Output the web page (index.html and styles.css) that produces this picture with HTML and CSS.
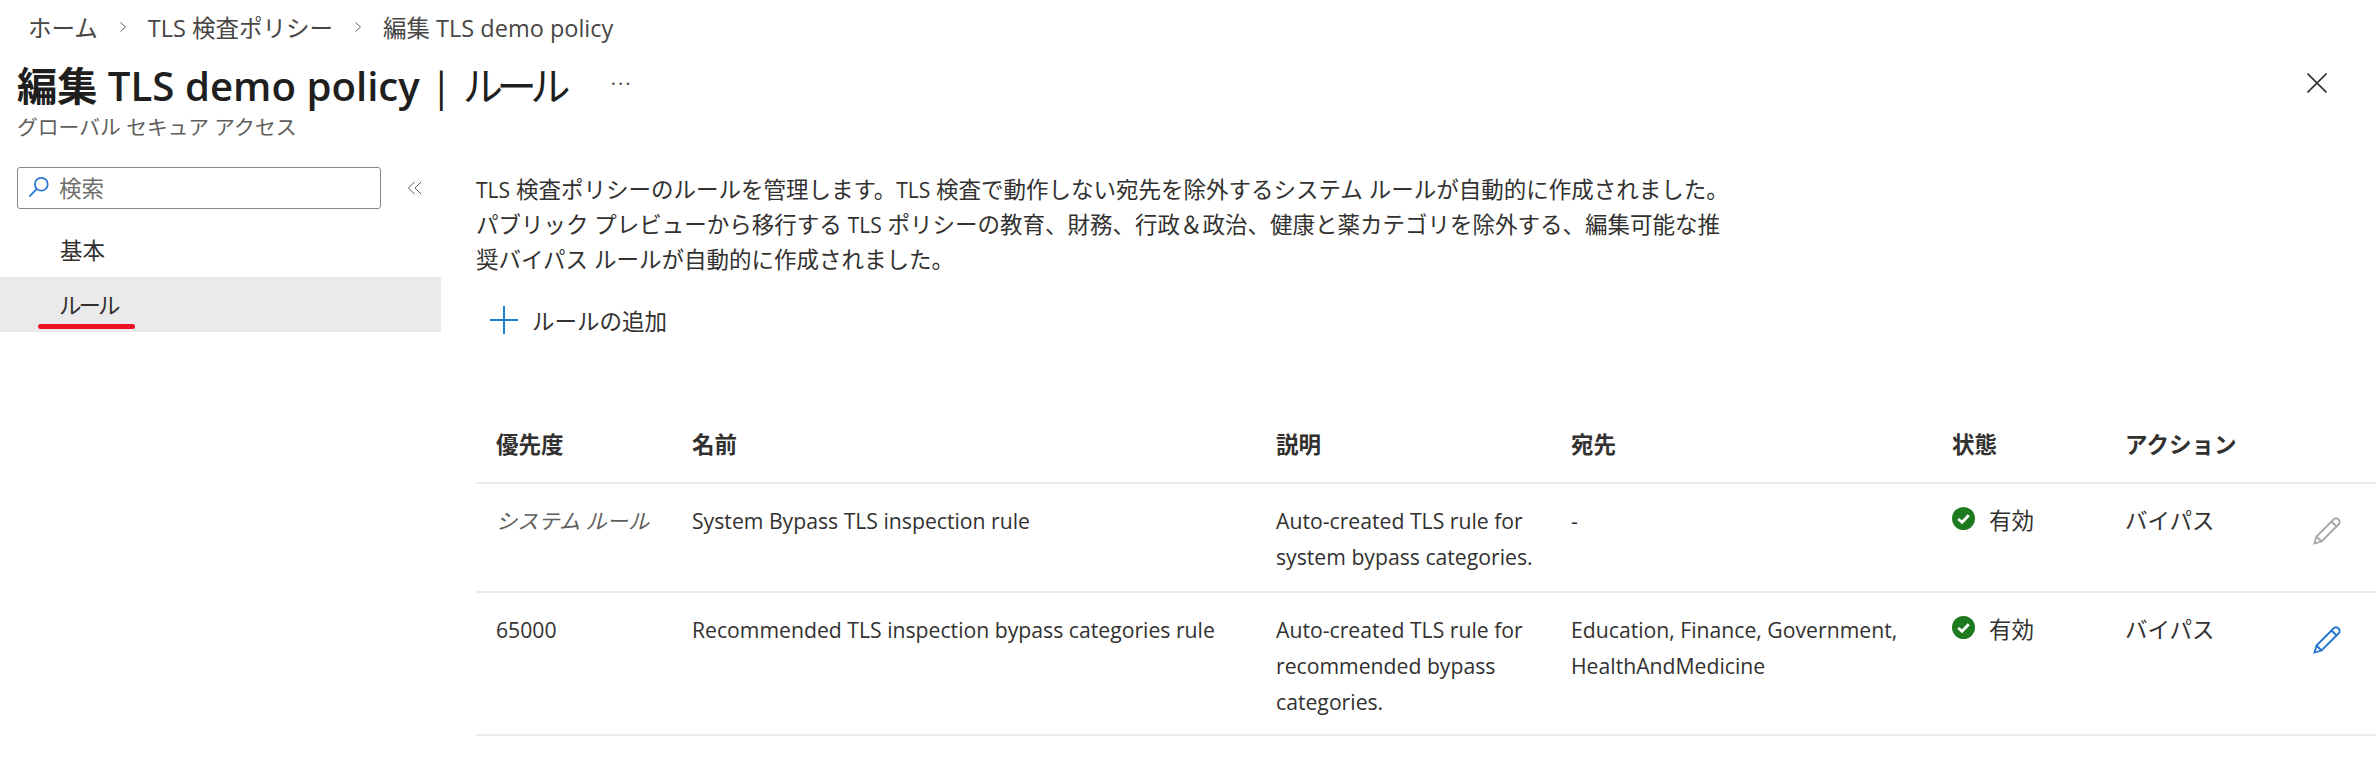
FILE: index.html
```html
<!DOCTYPE html>
<html lang="ja">
<head>
  <meta charset="UTF-8">
  <title>編集 TLS demo policy | ルール</title>
  <link rel="stylesheet" href="styles.css">
</head>
<body>

<nav class="crumbs">
  <a>ホーム</a>
  <svg class="crumb-sep" viewBox="0 0 10 14"><path d="M2.500 2.500 7.500 7 2.500 11.500"/></svg>
  <a>TLS 検査ポリシー</a>
  <svg class="crumb-sep" viewBox="0 0 10 14"><path d="M2.500 2.500 7.500 7 2.500 11.500"/></svg>
  <a>編集 TLS demo policy</a>
</nav>

<header class="blade-head">
  <div class="title-row">
    <h1>編集 TLS demo policy <span class="h-light">| <span class="h-kana">ルール</span></span></h1>
    <span class="more">...</span>
    <svg class="close" viewBox="0 0 20 20"><path d="M0.500 0.500 19.500 19.500M19.500 0.500 0.500 19.500"/></svg>
  </div>
  <div class="subtitle">グローバル セキュア アクセス</div>
</header>

<div class="blade-body">
  <aside class="side">
    <div class="search-row">
      <div class="search">
        <svg viewBox="0 0 24 24"><circle cx="14.500" cy="9" r="7"/><path d="M9.500 14 1.500 22.500"/></svg>
        <span>検索</span>
      </div>
      <svg class="collapse" viewBox="0 0 16 16"><path d="M7.500 1 0.500 8 7.500 15M15 1 8 8 15 15"/></svg>
    </div>
    <a class="nav-item">基本</a>
    <a class="nav-item active"><span class="kana-tight">ルール</span><i class="red-mark"></i></a>
  </aside>

  <main class="content">
    <p class="intro"><span class="lat">TLS</span> 検査ポリシーのルールを管理します。<span class="lat">TLS</span> 検査で動作しない宛先を除外するシステム ルールが自動的に作成されました。<br>パブリック プレビューから移行する <span class="lat">TLS</span> ポリシーの教育、財務、行政＆政治、健康と薬カテゴリを除外する、編集可能な推<br>奨バイパス ルールが自動的に作成されました。</p>

    <div class="toolbar">
      <svg class="plus" viewBox="0 0 28 28"><path d="M0 14H28M14 0V28"/></svg>
      <span>ルールの追加</span>
    </div>

    <table>
      <colgroup>
        <col class="c-pri"><col class="c-name"><col class="c-desc"><col class="c-dest"><col class="c-state"><col class="c-act"><col>
      </colgroup>
      <thead>
        <tr>
          <th>優先度</th>
          <th>名前</th>
          <th>説明</th>
          <th>宛先</th>
          <th>状態</th>
          <th>アクション</th>
          <th></th>
        </tr>
      </thead>
      <tbody>
        <tr class="row-a">
          <td class="sys">システム ルール</td>
          <td>System Bypass TLS inspection rule</td>
          <td>Auto-created TLS rule for system bypass categories.</td>
          <td>-</td>
          <td class="ja"><span class="state"><svg viewBox="0 0 24 24"><circle cx="12" cy="12" r="12"/><path d="M6.500 12.500 10.500 16 17.500 8.500"/></svg>有効</span></td>
          <td class="ja">バイパス</td>
          <td><svg class="pencil off" viewBox="0 0 28 28"><path d="M1.500 26.500 3.500 19.500 20.500 2.500C22 1 24 1 25.500 2.500 27 4 27 6 25.500 7.500L8.500 24.500ZM3.500 19.500 8.500 24.500M18.500 4.500 23.500 9.500"/></svg></td>
        </tr>
        <tr class="row-b">
          <td>65000</td>
          <td>Recommended TLS inspection bypass categories rule</td>
          <td>Auto-created TLS rule for recommended bypass categories.</td>
          <td>Education, Finance, Government, HealthAndMedicine</td>
          <td class="ja"><span class="state"><svg viewBox="0 0 24 24"><circle cx="12" cy="12" r="12"/><path d="M6.500 12.500 10.500 16 17.500 8.500"/></svg>有効</span></td>
          <td class="ja">バイパス</td>
          <td><svg class="pencil" viewBox="0 0 28 28"><path d="M1.500 26.500 3.500 19.500 20.500 2.500C22 1 24 1 25.500 2.500 27 4 27 6 25.500 7.500L8.500 24.500ZM3.500 19.500 8.500 24.500M18.500 4.500 23.500 9.500"/></svg></td>
        </tr>
      </tbody>
    </table>
  </main>
</div>

</body>
</html>
```

FILE: styles.css
```css
* {
  box-sizing: border-box;
}
body {
  margin: 0;
  background: #fff;
  color: #323130;
  font-family: "Open Sans", "Noto Sans CJK JP", sans-serif;
  font-size: 22.500px;
  overflow: hidden;
}
svg {
  display: block;
  flex: none;
  fill: none;
}
.lat {
  font-size: 21px;
  line-height: 1;
}

.crumbs {
  display: flex;
  align-items: center;
  height: 38px;
  margin-top: 8px;
  padding-left: 28px;
  font-size: 23.500px;
  color: #484644;
}
.crumb-sep {
  width: 10px;
  height: 14px;
  margin: 0 20px;
  stroke: #605e5c;
  stroke-width: 1;
}

.blade-head {
  padding: 0 0 0 17px;
}
.title-row {
  display: flex;
  align-items: center;
  height: 60px;
  margin-top: 7px;
}
h1 {
  margin: 0;
  font-size: 40.200px;
  font-weight: 600;
  color: #201f1e;
  white-space: pre;
}
.h-light {
  font-weight: 400;
}
.h-kana {
  letter-spacing: -6.500px;
}
.more {
  margin-left: 47px;
  font-size: 20px;
  letter-spacing: 2px;
  color: #484644;
  padding-bottom: 12px;
}
.close {
  width: 20px;
  height: 20px;
  margin-left: auto;
  margin-right: 49px;
  stroke: #323130;
  stroke-width: 1.600;
}
.subtitle {
  font-size: 20.800px;
  line-height: 28px;
  color: #605e5c;
}

.blade-body {
  display: flex;
  margin-top: 24px;
}
.side {
  flex: none;
  width: 441px;
  padding-top: 2px;
}
.search-row {
  display: flex;
  align-items: center;
  padding-left: 17px;
  margin-bottom: 13px;
}
.search {
  display: flex;
  align-items: center;
  width: 364px;
  height: 42px;
  padding-left: 10px;
  padding-bottom: 2px;
  border: 1.500px solid #8a8886;
  border-radius: 3px;
  color: #6e6d6b;
}
.search svg {
  width: 22px;
  height: 22px;
  margin-right: 9px;
  stroke: #2b7cd3;
  stroke-width: 2;
}
.collapse {
  width: 14px;
  height: 14px;
  margin-left: 27px;
  stroke: #484644;
  stroke-width: 1;
}
.nav-item {
  display: flex;
  align-items: center;
  position: relative;
  height: 55px;
  padding-left: 60px;
}
.nav-item.active {
  background: #ebeaea;
}
.kana-tight {
  margin-left: -1px;
  letter-spacing: -3px;
}
.red-mark {
  position: absolute;
  left: 38px;
  top: 47px;
  width: 97px;
  height: 5px;
  border-radius: 3px;
  background: #f01024;
}

.content {
  flex: 1;
  min-width: 0;
  padding-top: 7px;
  padding-left: 35px;
}
.intro {
  margin: 0;
  line-height: 35px;
  white-space: nowrap;
}
.toolbar {
  display: flex;
  align-items: center;
  height: 40px;
  margin-top: 23px;
  padding-left: 14px;
}
.plus {
  width: 28px;
  height: 28px;
  margin-right: 14px;
  stroke: #1a7fd4;
  stroke-width: 2;
}

table {
  width: 100%;
  margin-top: 75px;
  border-collapse: collapse;
  table-layout: fixed;
}
.c-pri { width: 196px; }
.c-name { width: 584px; }
.c-desc { width: 295px; }
.c-dest { width: 381px; }
.c-state { width: 173px; }
.c-act { width: 183px; }
th, td {
  padding: 0 6px 0 20px;
  text-align: left;
  vertical-align: top;
  line-height: 36px;
  font-weight: 400;
}
th {
  height: 68px;
  padding-top: 12px;
  font-weight: 700;
}
tr {
  border-bottom: 2px solid #edebe9;
}
td {
  padding-top: 19px;
  font-size: 21.200px;
}
td.ja {
  font-size: 22.500px;
}
.row-a td { height: 109px; }
.row-b td { height: 143px; }
.sys {
  font-style: italic;
  color: #605e5c;
}
.state {
  display: flex;
  align-items: flex-start;
}
.state svg {
  width: 23px;
  height: 23px;
  margin: 4px 14px 0 0;
}
.state circle {
  fill: #1d7a1f;
}
.state path {
  stroke: #fff;
  stroke-width: 3;
}
.pencil {
  width: 28px;
  height: 28px;
  margin: 14px 0 0 5px;
  stroke: #1f73d0;
  stroke-width: 1.800;
}
.pencil.off {
  stroke: #a8a6a4;
}
```
